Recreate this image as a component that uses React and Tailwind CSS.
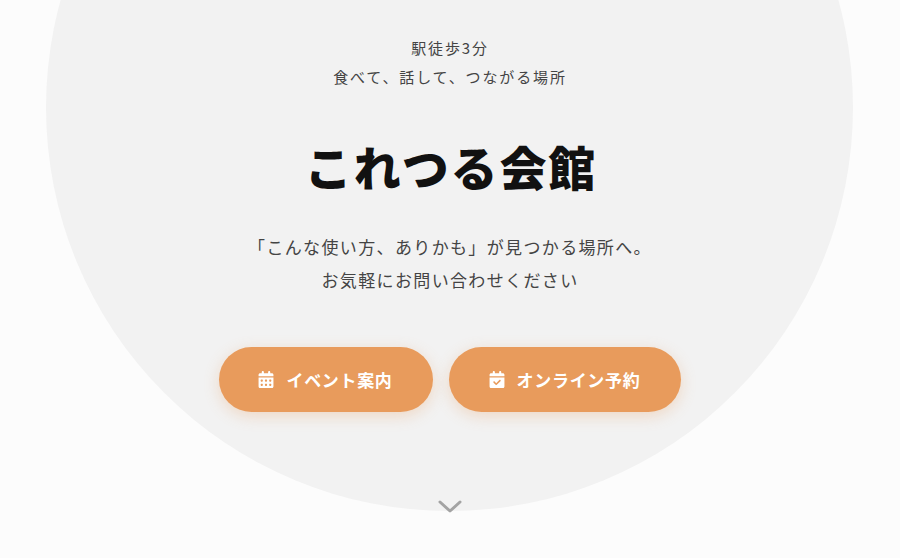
import React from 'react';
import { FaCalendarDays, FaCalendarCheck } from 'react-icons/fa6';

const font = "font-['Noto_Sans_CJK_JP','Noto_Sans',sans-serif]";

const App = () => {
  return (
    <div className={`relative h-[558px] overflow-hidden bg-[#fcfcfc] ${font}`}>
      {/* big circle behind the hero */}
      <div className="absolute left-[46px] top-[-296px] h-[807px] w-[807px] rounded-full bg-[#f2f2f2]" />

      <div className="relative flex flex-col items-center pt-[33px] text-center">
        <p className="text-[15px] leading-[29px] tracking-[0.125em] text-[#444]">駅徒歩3分</p>
        <p className="text-[15px] leading-[29px] tracking-[0.125em] text-[#444]">食べて、話して、つながる場所</p>

        <h1 className="mt-[43px] pl-[2px] text-[47px] font-black leading-[64px] tracking-[0.04em] text-[#111]">これつる会館</h1>

        <p className="mt-[32px] text-[17px] leading-[33px] tracking-[0.08em] text-[#444]">
          「こんな使い方、ありかも」が見つかる場所へ。
        </p>
        <p className="text-[17px] leading-[33px] tracking-[0.08em] text-[#444]">お気軽にお問い合わせください</p>

        <div className="mt-[51px] flex gap-[16px]">
          <a className="flex h-[65px] w-[214px] items-center justify-center gap-[12px] rounded-full bg-[#e89b5c] pr-[1px] text-[17px] font-bold tracking-[0.04em] text-white shadow-[0_4px_15px_rgba(233,156,92,0.3)]">
            <FaCalendarDays className="h-[17px] w-[16px]" />
            イベント案内
          </a>
          <a className="flex h-[65px] w-[232px] items-center justify-center gap-[12px] rounded-full bg-[#e89b5c] pr-[1px] text-[17px] font-bold tracking-[0.04em] text-white shadow-[0_4px_15px_rgba(233,156,92,0.3)]">
            <FaCalendarCheck className="h-[17px] w-[16px]" />
            オンライン予約
          </a>
        </div>

        <svg className="mt-[87px] h-[15px] w-[24px] text-[#a3a3a3]" viewBox="0 0 24 15" fill="none" stroke="currentColor" strokeWidth="3" strokeLinecap="round" strokeLinejoin="round">
          <path d="M2 3l10 9 10-9" />
        </svg>
      </div>
    </div>
  );
};

export default App;
